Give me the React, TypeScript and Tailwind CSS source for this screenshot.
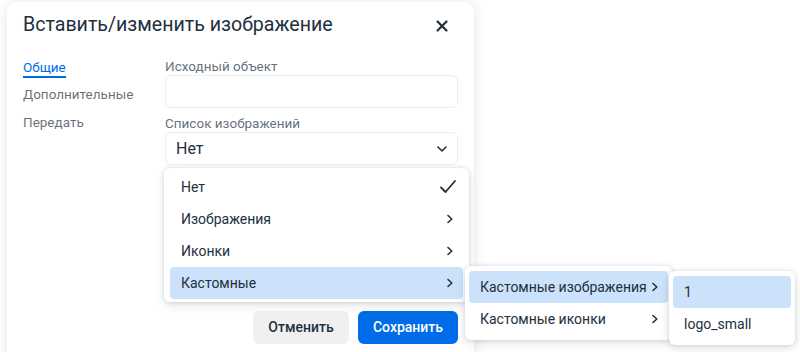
import React from "react";

const Chevron = ({ className = "" }: { className?: string }) => (
  <svg width="10" height="10" viewBox="0 0 10 10" className={className}>
    <path d="M3 1.5 L6.8 5 L3 8.5" fill="none" stroke="#222f3e" strokeWidth="1.6" strokeLinecap="round" strokeLinejoin="round" />
  </svg>
);

const MenuItem = ({ label, active, chevron, check }: { label: string; active?: boolean; chevron?: boolean; check?: boolean }) => (
  <div className={`flex h-8 items-center justify-between rounded-[4px] pl-[11px] pr-[8px] ${active ? "bg-[#cce2fa]" : ""}`}>
    <span className="text-[14px] text-[#222f3e]">{label}</span>
    {chevron && <Chevron />}
    {check && (
      <svg width="18" height="16" viewBox="0 0 18 16" className="-mr-[2px]">
        <path d="M2 8.5 L6.5 13 L16 2" fill="none" stroke="#222f3e" strokeWidth="1.8" strokeLinecap="round" strokeLinejoin="round" />
      </svg>
    )}
  </div>
);

export default function App() {
  return (
    <div className="relative h-[352px] w-[800px] overflow-hidden bg-white" style={{ fontFamily: "Roboto, 'Noto Sans', sans-serif" }}>
      <div className="ml-[7px] mt-[2px] h-[420px] w-[467px] rounded-[10px] bg-white shadow-[0_0_14px_rgba(34,47,62,0.12)]">
        <div className="flex items-center justify-between pl-4 pr-[25px] pt-[9px]">
          <span className="text-[19.6px] leading-[28px] text-[#222f3e]">Вставить/изменить изображение</span>
          <svg width="14" height="14" viewBox="0 0 14 14" className="mt-[2px]">
            <path d="M2.5 2.5 L11.5 11.5 M11.5 2.5 L2.5 11.5" stroke="#222f3e" strokeWidth="2.2" strokeLinecap="round" />
          </svg>
        </div>
        <div className="flex pl-4 pt-[18px]">
          <div className="flex w-[142px] flex-col text-[13.5px] text-[#222f3e]/70">
            <div className="flex h-[23px] flex-col items-start pt-[2px]">
              <span className="border-b-2 border-[#006ce7] leading-[17px] text-[#006ce7]">Общие</span>
            </div>
            <span className="leading-[28px]">Дополнительные</span>
            <span className="leading-[28px]">Передать</span>
          </div>
          <div className="flex w-[293px] flex-col">
            <span className="text-[13.5px] leading-[18px] text-[#222f3e]/70">Исходный объект</span>
            <div className="h-[33px] rounded-[6px] border border-[#eeeeee]" />
            <span className="mt-[6px] text-[13.5px] leading-[18px] text-[#222f3e]/70">Список изображений</span>
            <div className="flex h-[33px] items-center justify-between rounded-[6px] border border-[#eeeeee] pl-[10px] pr-[9px]">
              <span className="text-[16px] text-[#222f3e]">Нет</span>
              <svg width="12" height="8" viewBox="0 0 12 8">
                <path d="M2 2 L6 6 L10 2" fill="none" stroke="#222f3e" strokeWidth="1.6" strokeLinecap="round" strokeLinejoin="round" />
              </svg>
            </div>
            <div className="mt-[146px] flex justify-end gap-[9px]">
              <button className="h-[33px] w-[96px] rounded-[6px] bg-[#f0f0f0] text-[14px] font-medium text-[#222f3e]">Отменить</button>
              <button className="h-[33px] w-[100px] rounded-[6px] bg-[#006ce7] text-[14px] font-medium text-white">Сохранить</button>
            </div>
          </div>
        </div>
      </div>

      <div className="absolute left-[164px] top-[168px] w-[305px] rounded-[6px] bg-white px-[6px] py-[3px] shadow-[0_0_4px_rgba(34,47,62,0.15),0_4px_10px_rgba(34,47,62,0.12)]">
        <MenuItem label="Нет" check />
        <MenuItem label="Изображения" chevron />
        <MenuItem label="Иконки" chevron />
        <MenuItem label="Кастомные" chevron active />
      </div>

      <div className="absolute left-[465px] top-[266px] w-[207px] rounded-[6px] bg-white px-[4px] py-[5px] shadow-[0_0_4px_rgba(34,47,62,0.15),0_4px_10px_rgba(34,47,62,0.12)]">
        <MenuItem label="Кастомные изображения" chevron active />
        <MenuItem label="Кастомные иконки" chevron />
      </div>

      <div className="absolute left-[669px] top-[271px] w-[126px] rounded-[6px] bg-white px-[4px] py-[5px] shadow-[0_0_4px_rgba(34,47,62,0.15),0_4px_10px_rgba(34,47,62,0.12)]">
        <MenuItem label="1" active />
        <MenuItem label="logo_small" />
      </div>
    </div>
  );
}
